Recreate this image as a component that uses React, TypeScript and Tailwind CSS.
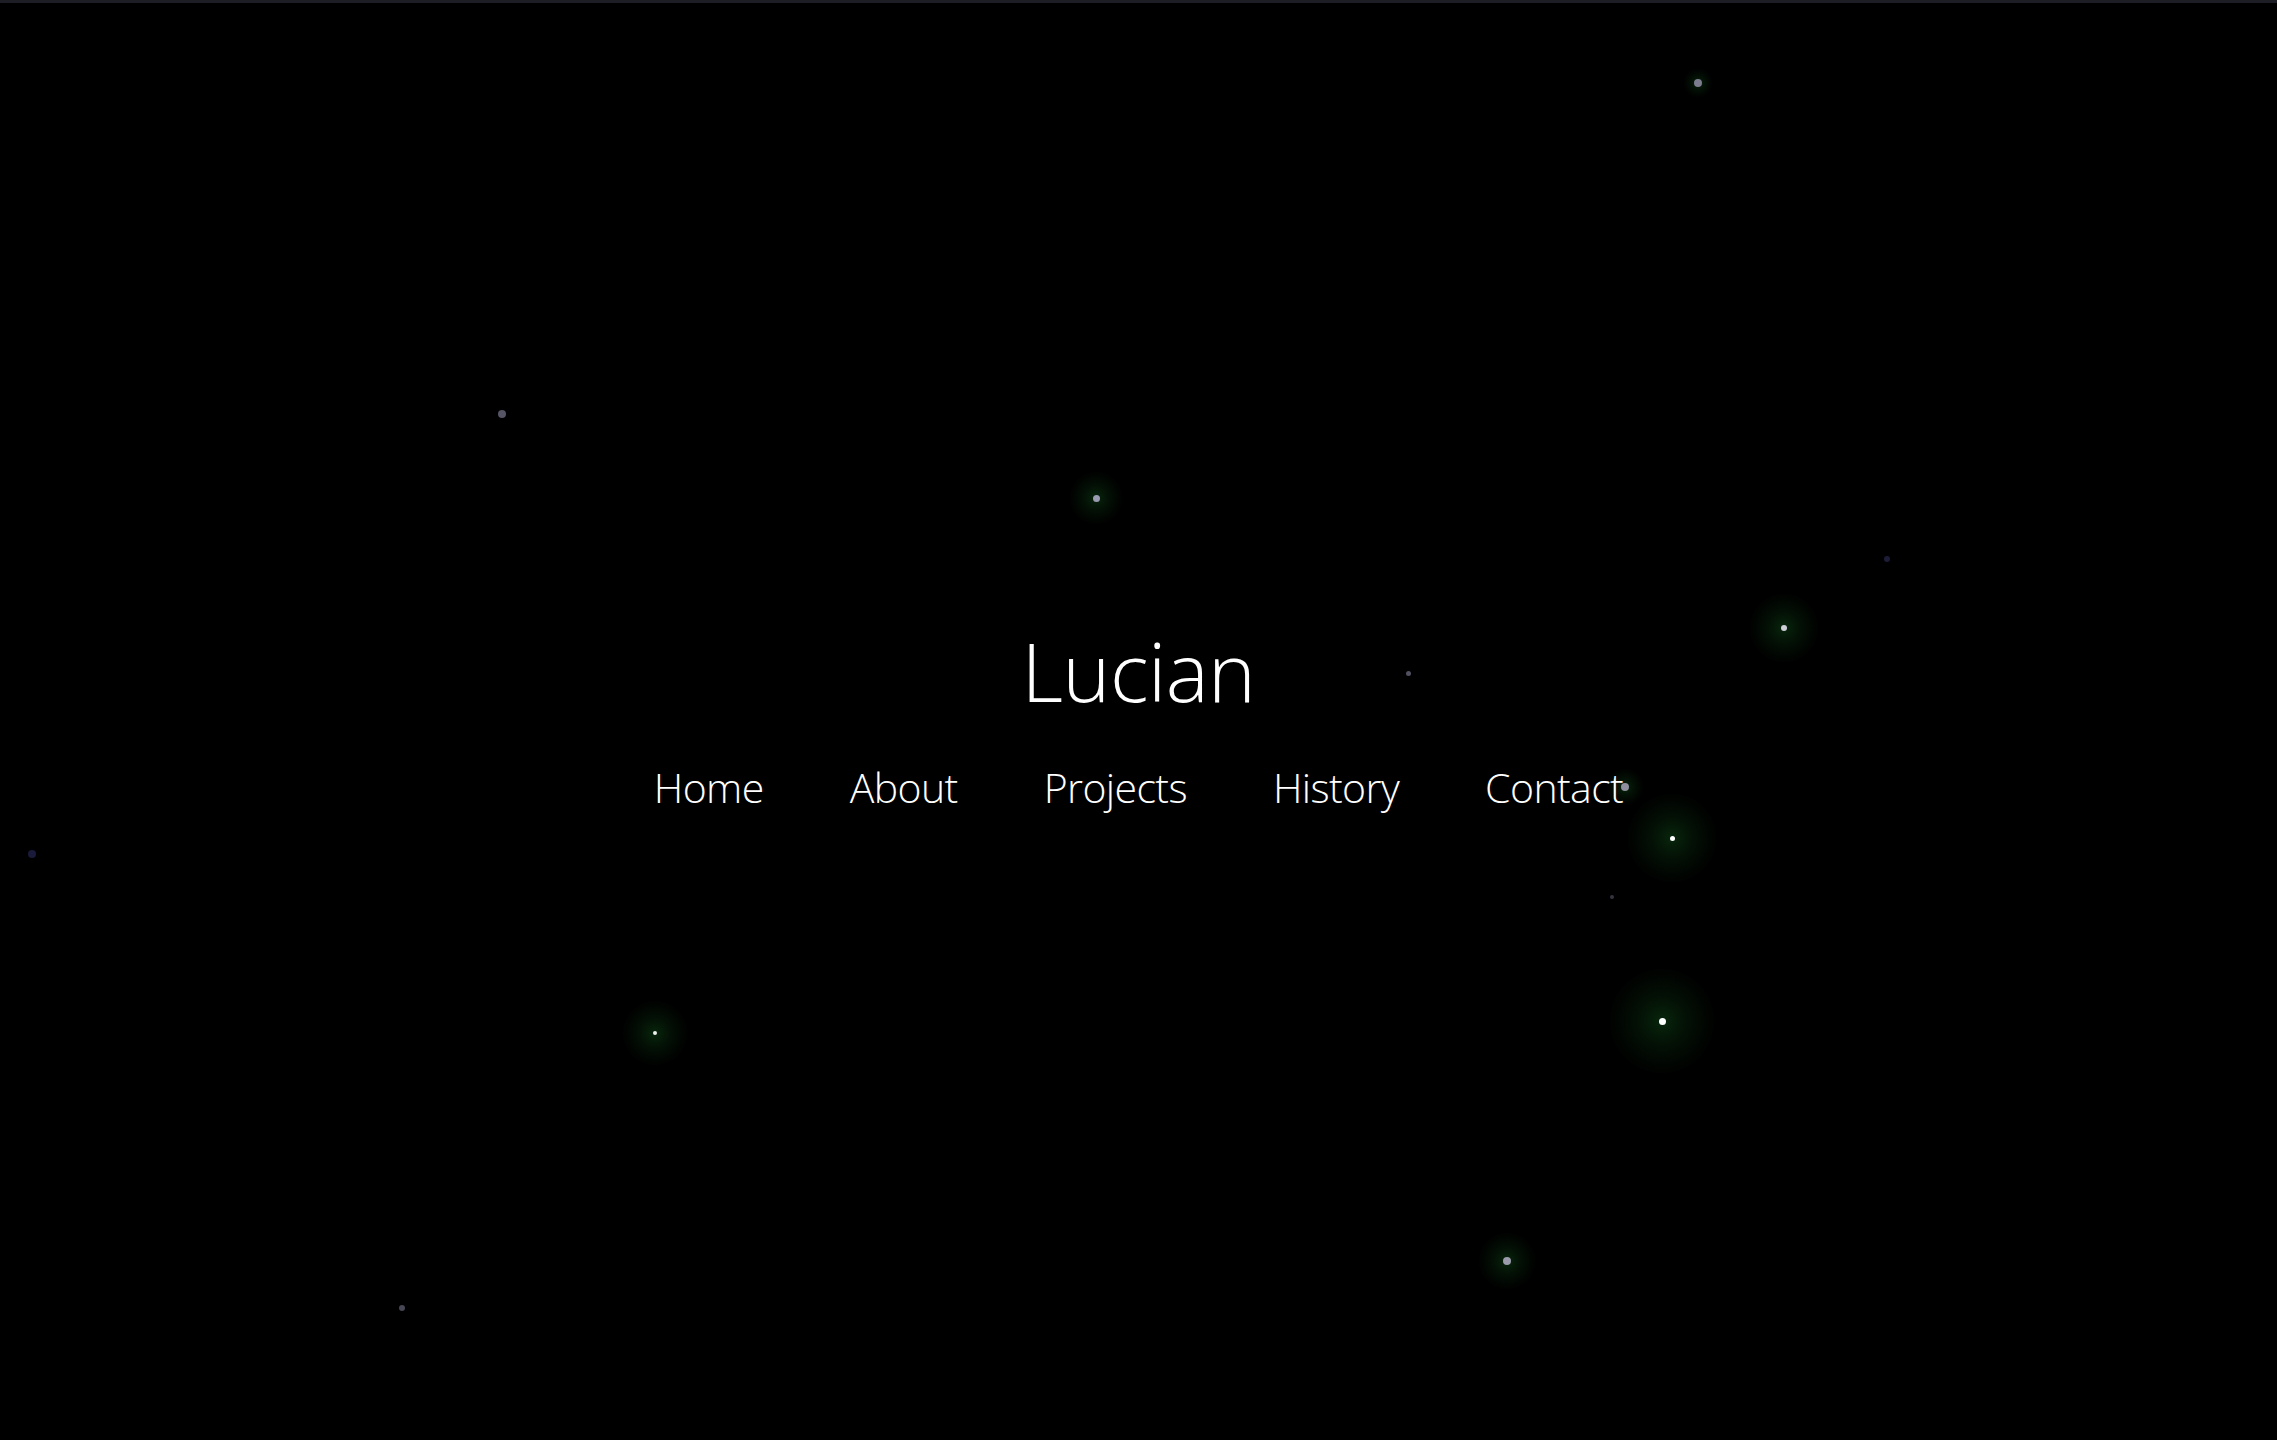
const PARTICLES = [
  { x: 1698, y: 83, r: 4, color: '#7c7c8e', glow: 14 },
  { x: 502, y: 414, r: 4, color: '#555566', glow: 0 },
  { x: 1096, y: 498, r: 3.5, color: '#9a9ab0', glow: 26 },
  { x: 1784, y: 628, r: 3, color: '#cfcfd8', glow: 34 },
  { x: 1408, y: 673, r: 2.5, color: '#505060', glow: 0 },
  { x: 1887, y: 559, r: 3, color: '#1c1c38', glow: 0 },
  { x: 1625, y: 787, r: 4, color: '#8e8e9c', glow: 18 },
  { x: 1672, y: 838, r: 2.5, color: '#ffffff', glow: 44 },
  { x: 1612, y: 897, r: 2, color: '#34343f', glow: 0 },
  { x: 32, y: 854, r: 4, color: '#1a1a3a', glow: 0 },
  { x: 655, y: 1033, r: 2, color: '#f0f0f0', glow: 32 },
  { x: 1662, y: 1021, r: 3.5, color: '#ffffff', glow: 52 },
  { x: 1507, y: 1261, r: 4, color: '#9a9aaa', glow: 28 },
  { x: 402, y: 1308, r: 3, color: '#464654', glow: 0 },
];

const LINKS = ['Home', 'About', 'Projects', 'History', 'Contact'];

export default function App() {
  return (
    <div className="relative h-screen w-full overflow-hidden bg-black border-t-[3px] border-[#1c1d25]">
      {/* particle field */}
      {PARTICLES.map((p, i) => (
        <div key={i} className="absolute pointer-events-none" style={{ left: p.x, top: p.y - 3 }}>
          {p.glow > 0 && (
            <div
              className="absolute rounded-full"
              style={{
                left: -p.glow,
                top: -p.glow,
                width: p.glow * 2,
                height: p.glow * 2,
                background:
                  'radial-gradient(circle, rgba(18,90,28,0.42) 0%, rgba(14,70,22,0.22) 35%, rgba(8,40,12,0.08) 65%, rgba(0,0,0,0) 100%)',
              }}
            />
          )}
          <div
            className="absolute rounded-full"
            style={{ left: -p.r, top: -p.r, width: p.r * 2, height: p.r * 2, backgroundColor: p.color }}
          />
        </div>
      ))}

      <div
        className="relative flex h-full flex-col items-center justify-center pb-[6px] text-white"
        style={{ fontFamily: '"Open Sans", "Noto Sans", sans-serif' }}
      >
        <h1 className="text-[81px] font-light leading-none tracking-[-0.5px]">Lucian</h1>
        <nav className="mt-[56px] flex items-center gap-[86px]">
          {LINKS.map((l) => (
            <a key={l} href="#" className="text-[41px] font-light leading-none tracking-[-0.6px] text-white">
              {l}
            </a>
          ))}
        </nav>
      </div>
    </div>
  );
}
